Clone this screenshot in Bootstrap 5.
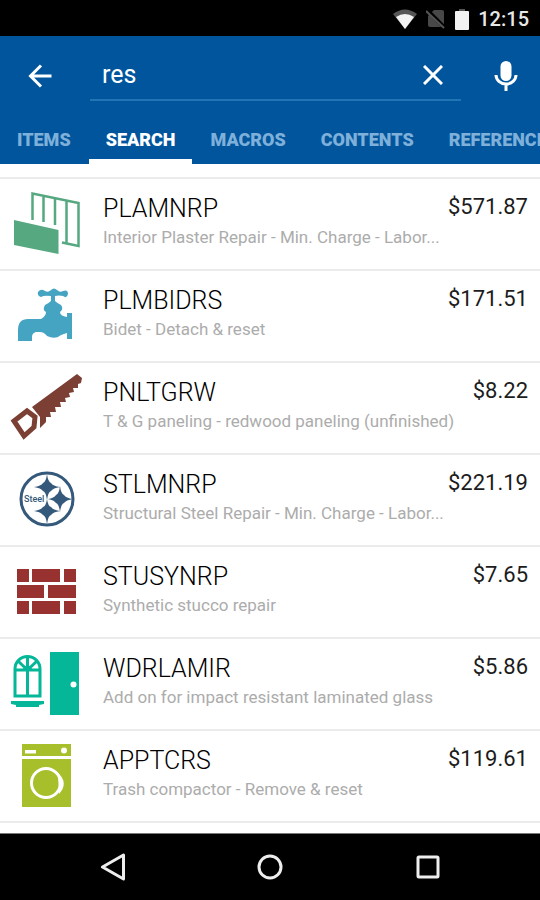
<!DOCTYPE html>
<html lang="en">
<head>
<meta charset="utf-8">
<meta name="viewport" content="width=device-width, initial-scale=1">
<title>Item search</title>
<link href="https://cdn.jsdelivr.net/npm/bootstrap@5.3.0/dist/css/bootstrap.min.css" rel="stylesheet">
<style>
  body { font-family: Roboto, "Liberation Sans", sans-serif; background: #fff; color: #1c1c1c; }
  svg { display: block; flex: none; }
  .status-bar { height: 36px; padding-top: 2px; background: #000; color: #e8e8e8; padding-right: 11px; gap: 9px; }
  .clock { font-size: 20px; line-height: 24px; font-weight: 500; }
  .app-header { background: #00559d; }
  .search-row { height: 80px; padding-left: 20px; padding-right: 14px; }
  .icon-btn { width: 40px; height: 40px; padding: 0; border: 0; background: none; color: #fff; display: flex; flex: none; align-items: center; justify-content: center; }
  .search-box { height: 50px; min-width: 0; margin: 0 25px 0 30px; border-bottom: 2px solid #2275b5; padding-left: 12px; padding-right: 8px; }
  .search-box input { font-size: 25px; line-height: 30px; color: #fff; background: none; border: 0; outline: 0; padding: 0; min-width: 0; }
  .tab-strip { height: 48px; gap: 1px; }
  .tab-strip .nav-link { height: 48px; padding: 12px 17px 0; font-size: 18px; line-height: 24px; font-weight: 900; color: #7fb0da; white-space: nowrap; border-bottom: 5px solid transparent; }
  .tab-strip .nav-link.active { color: #fff; border-bottom-color: #fff; }
  .results { margin-top: 13px; border-top: 2px solid #ececec; }
  .result { height: 92px; color: inherit; text-decoration: none; border-bottom: 2px solid #ececec; padding: 0 12px 0 10px; }
  .thumb { width: 72px; height: 72px; margin: 9px 21px 0 0; }
  .code { font-size: 25px; line-height: 32px; padding-top: 14px; font-weight: 300; color: #000; }
  .note { font-size: 17px; line-height: 24px; color: #acacac; white-space: nowrap; }
  .price { font-size: 22px; line-height: 28px; padding-top: 14px; }
  .main-col { width: 0; }
  .head-line { gap: 8px; }
  .nav-keys { background: #000; height: 67px; border-top: 1px solid #777; padding: 0 34px; color: #eee; }
  .nav-keys .icon-btn { color: #eee; width: 157px; height: 64px; }
</style>
</head>
<body class="d-flex flex-column min-vh-100 overflow-x-hidden">
<div class="status-bar d-flex align-items-center justify-content-end">
  <svg width="24" height="20" viewBox="0 0 24 20"><path d="M0 5Q12-4 24 5L12 20Z" fill="#555"/><path d="M3 8Q12 2 21 8L12 20Z" fill="#f2f2f2"/></svg>
  <svg width="20" height="20" viewBox="0 0 20 20"><path d="M8 1h8q2 0 2 2v15H4q-2 0-2-2V7Z" fill="#484848"/><path d="M0 0l19 19" stroke="#000" stroke-width="4"/><path d="M0 2l18 17" stroke="#555" stroke-width="2"/></svg>
  <svg width="14" height="21" viewBox="0 0 14 21"><path d="M4 0h6v3H4Z" fill="#555"/><rect y="2" width="14" height="19" rx="1" fill="#f2f2f2"/></svg>
  <span class="clock">12:15</span>
</div>

<header class="app-header">
  <div class="search-row d-flex align-items-center">
    <button class="icon-btn" type="button" aria-label="Back"><svg width="24" height="24" viewBox="0 0 24 24" fill="none" stroke="currentColor" stroke-width="3"><path d="M23.500 12H3M13 1.500 2.500 12 13 22.500"/></svg></button>
    <div class="search-box d-flex align-items-center flex-grow-1">
      <input class="flex-grow-1" type="text" value="res" aria-label="Search items">
      <button class="icon-btn" type="button" aria-label="Clear search"><svg width="20" height="20" viewBox="0 0 20 20" fill="none" stroke="currentColor" stroke-width="3"><path d="M1 1l18 18M19 1 1 19"/></svg></button>
    </div>
    <button class="icon-btn" type="button" aria-label="Voice search"><svg width="24" height="32" viewBox="0 0 24 32"><rect x="6.500" y="1" width="11" height="20" rx="5.500" fill="currentColor"/><path d="M2 15a10 9 0 0 0 20 0M12 24v7" fill="none" stroke="currentColor" stroke-width="3"/></svg></button>
  </div>
  <nav class="tab-strip nav flex-nowrap overflow-hidden" aria-label="Sections">
    <a class="nav-link" href="#items">ITEMS</a>
    <a class="nav-link active" href="#search" aria-current="page">SEARCH</a>
    <a class="nav-link" href="#macros">MACROS</a>
    <a class="nav-link" href="#contents">CONTENTS</a>
    <a class="nav-link" href="#references">REFERENCES</a>
  </nav>
</header>

<main class="results flex-grow-1" id="search">
  <a class="result d-flex" href="#PLAMNRP">
    <svg class="thumb" viewBox="0 0 72 72"><g fill="none" stroke="#56a880" stroke-width="2.500"><path d="M22.500 32V5.500L68.500 15V58L52 54.500M33.500 7.500V34M45 10V37M56.500 12.500V55"/></g><path d="M4 32 48.500 42V66L4 57Z" fill="#56a880"/></svg>
    <div class="main-col flex-grow-1">
      <div class="head-line d-flex justify-content-between"><span class="code">PLAMNRP</span><span class="price">$571.87</span></div>
      <div class="note">Interior Plaster Repair - Min. Charge - Labor...</div>
    </div>
  </a>
  <a class="result d-flex" href="#PLMBIDRS">
    <svg class="thumb" viewBox="0 0 72 72"><path fill="#46a4c3" d="M8 61V50Q8 39 18 39H31Q36 36 36 32Q32 30 35 25Q39 23 41 21V16Q34 15 31 17Q27 16 28 12Q31 8 35 11Q38 13 41 10Q44 7 47 10Q50 13 53 11Q58 9 58 14Q57 19 53 16Q49 15 45 16V21Q47 23 51 25Q54 29 50 32Q50 36 57 37V33H62V59H57V53Q50 55 48 57Q43 59 37 56Q34 52 30 52H26Q22 53 22 57V61Z"/></svg>
    <div class="main-col flex-grow-1">
      <div class="head-line d-flex justify-content-between"><span class="code">PLMBIDRS</span><span class="price">$171.51</span></div>
      <div class="note">Bidet - Detach &amp; reset</div>
    </div>
  </a>
  <a class="result d-flex" href="#PNLTGRW">
    <svg class="thumb" viewBox="0 0 72 72"><path fill="#7b3f34" d="M22 35 67 2 72 6 71 11 68 12V16H63L64 20 59 21 60 25 55 26 56 30 50 30 51 35 45 35 46 40 40 40 41 45 36 45V50L30 56V45Z"/><path fill="none" stroke="#7b3f34" stroke-width="5" stroke-linejoin="miter" d="M4 49 17 39 25 45 24 55 14 64Z"/></svg>
    <div class="main-col flex-grow-1">
      <div class="head-line d-flex justify-content-between"><span class="code">PNLTGRW</span><span class="price">$8.22</span></div>
      <div class="note">T &amp; G paneling - redwood paneling (unfinished)</div>
    </div>
  </a>
  <a class="result d-flex" href="#STLMNRP">
    <svg class="thumb" viewBox="0 0 72 72"><circle cx="37" cy="35" r="26" fill="none" stroke="#35597b" stroke-width="3"/><path fill="#35597b" d="M37 10Q38 18 41 19Q43 22 50 23Q43 24 41 27Q38 28 37 36Q36 28 33 27Q31 24 24 23Q31 22 33 19Q36 18 37 10ZM50 22Q51 30 54 31Q56 34 63 35Q56 36 54 39Q51 40 50 48Q49 40 46 39Q44 36 38 35Q44 34 46 31Q49 30 50 22ZM37 35Q38 42 41 43Q43 46 50 47Q43 48 41 51Q38 52 37 60Q36 52 33 51Q31 48 24 47Q31 46 33 43Q36 42 37 35Z"/><text x="14" y="38" font-size="9" font-weight="500" fill="#35597b">Steel</text></svg>
    <div class="main-col flex-grow-1">
      <div class="head-line d-flex justify-content-between"><span class="code">STLMNRP</span><span class="price">$221.19</span></div>
      <div class="note">Structural Steel Repair - Min. Charge - Labor...</div>
    </div>
  </a>
  <a class="result d-flex" href="#STUSYNRP">
    <svg class="thumb" viewBox="0 0 72 72"><path fill="#983230" d="M7 13H19V26H7ZM22 13H50V26H22ZM54 13H66V26H54ZM7 29H34V42H7ZM38 29H66V42H38ZM7 45H19V58H7ZM22 45H50V58H22ZM54 45H66V58H54Z"/></svg>
    <div class="main-col flex-grow-1">
      <div class="head-line d-flex justify-content-between"><span class="code">STUSYNRP</span><span class="price">$7.65</span></div>
      <div class="note">Synthetic stucco repair</div>
    </div>
  </a>
  <a class="result d-flex" href="#WDRLAMIR">
    <svg class="thumb" viewBox="0 0 72 72"><path fill="#05b798" d="M40 4H69V67H40Z"/><circle cx="63.500" cy="36.500" r="3" fill="#fff"/><path fill="none" stroke="#05b798" stroke-width="3" d="M5 48V21a12.500 12.500 0 0 1 25 0V48ZM5 22H30M17.500 9V48M17.500 22 8 13M17.500 22 27 13"/><path fill="#05b798" d="M13 22a4.500 4.500 0 0 1 9 0ZM1 53H34V56L29 57V59H6V57L1 56Z"/></svg>
    <div class="main-col flex-grow-1">
      <div class="head-line d-flex justify-content-between"><span class="code">WDRLAMIR</span><span class="price">$5.86</span></div>
      <div class="note">Add on for impact resistant laminated glass</div>
    </div>
  </a>
  <a class="result d-flex" href="#APPTCRS">
    <svg class="thumb" viewBox="0 0 72 72"><path fill="#a6bf2b" d="M12 4H61V16H12ZM12 19H61V67H12Z"/><path fill="#fff" d="M15 10H26V13.500H15Z"/><circle cx="54" cy="10.500" r="3" fill="#fff"/><circle cx="36" cy="43" r="14.500" fill="none" stroke="#fff" stroke-width="3"/><path fill="#fff" d="M48 33Q59 43 49 54Z"/></svg>
    <div class="main-col flex-grow-1">
      <div class="head-line d-flex justify-content-between"><span class="code">APPTCRS</span><span class="price">$119.61</span></div>
      <div class="note">Trash compactor - Remove &amp; reset</div>
    </div>
  </a>
</main>

<footer class="nav-keys d-flex justify-content-between align-items-center">
  <button class="icon-btn" type="button" aria-label="Back key"><svg width="26" height="28" viewBox="0 0 26 28" fill="none" stroke="currentColor" stroke-width="3" stroke-linejoin="round"><path d="M23.500 2V26L2.500 14Z"/></svg></button>
  <button class="icon-btn" type="button" aria-label="Home key"><svg width="26" height="26" viewBox="0 0 26 26" fill="none" stroke="currentColor" stroke-width="3"><circle cx="13" cy="13" r="11"/></svg></button>
  <button class="icon-btn" type="button" aria-label="Overview key"><svg width="24" height="24" viewBox="0 0 24 24" fill="none" stroke="currentColor" stroke-width="3"><rect x="2" y="2" width="20" height="20" rx="1"/></svg></button>
</footer>
<script src="https://cdn.jsdelivr.net/npm/bootstrap@5.3.0/dist/js/bootstrap.bundle.min.js"></script>
</body>
</html>
